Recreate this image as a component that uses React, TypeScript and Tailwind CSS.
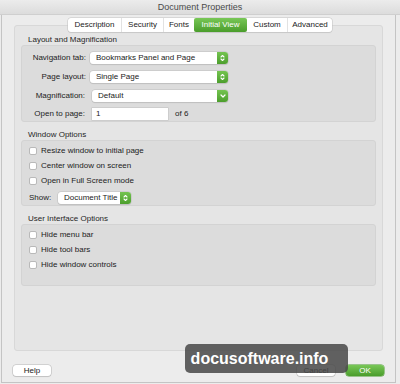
import React from 'react';

const Stepper = () => (
  <span className="flex h-full w-[11px] items-center justify-center rounded-r-[3px] bg-gradient-to-b from-[#74c450] to-[#4c9e2c]">
    <svg width="5" height="8" viewBox="0 0 5 8" fill="none" stroke="white" strokeWidth="1.1" strokeLinecap="round" strokeLinejoin="round">
      <path d="M1 3 L2.5 1.5 L4 3" />
      <path d="M1 5 L2.5 6.5 L4 5" />
    </svg>
  </span>
);

const Chevron = () => (
  <span className="flex h-full w-[11px] items-center justify-center rounded-r-[3px] bg-gradient-to-b from-[#74c450] to-[#4c9e2c]">
    <svg width="6" height="4" viewBox="0 0 6 4" fill="none" stroke="white" strokeWidth="1.2" strokeLinecap="round" strokeLinejoin="round">
      <path d="M1 1 L3 3 L5 1" />
    </svg>
  </span>
);

interface SelectProps {
  value: string;
  width: string;
  popup?: boolean;
}

const Select = ({ value, width, popup = false }: SelectProps) => (
  <div className={`flex h-[12px] items-center rounded-[3px] bg-white shadow-[0_0_0_0.5px_#bdbdbd,0_1px_1px_rgba(0,0,0,0.12)] ${width}`}>
    <span className="flex-1 pl-[6px] text-[8px] leading-none text-[#222]">{value}</span>
    {popup ? <Chevron /> : <Stepper />}
  </div>
);

const Check = ({ label }: { label: string }) => (
  <div className="flex h-[8px] items-center">
    <span className="h-[8px] w-[8px] rounded-[2px] border border-[#b9b9b9] bg-white" />
    <span className="ml-[4px] text-[8px] leading-none text-[#222]">{label}</span>
  </div>
);

const Section = ({ title, children, className }: { title: string; children: React.ReactNode; className: string }) => (
  <div>
    <div className="h-[10px] pl-[7px] text-[8px] leading-[10px] text-[#262626]">{title}</div>
    <div className={`rounded-[3px] border border-[#d3d3d3] bg-[#dcdcdc] ${className}`}>{children}</div>
  </div>
);

const tabs = ['Description', 'Security', 'Fonts', 'Initial View', 'Custom', 'Advanced'];
const tabWidths = ['w-[53px]', 'w-[42px]', 'w-[31px]', 'w-[53px]', 'w-[40px]', 'w-[45px]'];

export default function App() {
  return (
    <div className="relative flex h-[384px] w-[400px] flex-col overflow-hidden bg-[#ececec] font-['Liberation_Sans',Arial,sans-serif]">
      <div className="h-[15px] border-b border-[#cfcfcf] bg-gradient-to-b from-[#ececec] to-[#dcdcdc] text-center text-[9px] leading-[14px] text-[#4a4a4a]">
        Document Properties
      </div>

      <div className="flex flex-1 flex-col border-x border-b border-[#c4c4c4] mr-[4px] ml-[1px] mb-[1px]">
        <div className="relative z-10 mt-[3px] flex justify-center pl-[3px]">
          <div className="flex h-[14px] rounded-[3px] bg-white shadow-[0_0_0_0.5px_#c2c2c2,0_1px_1px_rgba(0,0,0,0.1)]">
            {tabs.map((t, i) => (
              <div
                key={t}
                className={`flex items-center justify-center text-[8px] leading-none ${tabWidths[i]} ${
                  t === 'Initial View'
                    ? 'rounded-[2px] bg-gradient-to-b from-[#78c756] to-[#4a9d2b] text-white'
                    : 'text-[#222]'
                } ${i > 0 && i !== 3 && i !== 4 ? 'border-l border-[#e2e2e2]' : ''}`}
              >
                {t}
              </div>
            ))}
          </div>
        </div>

        <div className="mx-[12px] -mt-[7px] h-[326px] rounded-[3px] border border-[#d8d8d8] bg-[#e5e5e5] px-[6px] pt-[9px]">
          <Section title="Layout and Magnification" className="h-[77px] pt-[6px]">
            <div className="flex h-[12px] items-center">
              <span className="w-[68px] pr-[4px] text-right text-[8px] text-[#222]">Navigation tab:</span>
              <Select value="Bookmarks Panel and Page" width="w-[138px]" />
            </div>
            <div className="mt-[7px] flex h-[12px] items-center">
              <span className="w-[68px] pr-[4px] text-right text-[8px] text-[#222]">Page layout:</span>
              <Select value="Single Page" width="w-[138px]" />
            </div>
            <div className="mt-[7px] flex h-[12px] items-center">
              <span className="w-[70px] pr-[7px] text-right text-[8px] text-[#222]">Magnification:</span>
              <Select value="Default" width="w-[136px]" popup />
            </div>
            <div className="mt-[6px] flex h-[12px] items-center">
              <span className="w-[70px] pr-[7px] text-right text-[8px] text-[#222]">Open to page:</span>
              <div className="flex h-[12px] w-[76px] items-center bg-white pl-[4px] text-[8px] text-[#222] shadow-[0_0_0_0.5px_#bdbdbd]">1</div>
              <span className="ml-[7px] text-[8px] text-[#222]">of 6</span>
            </div>
          </Section>

          <div className="h-[8px]" />

          <Section title="Window Options" className="h-[66px] pl-[7px] pt-[6px]">
            <div className="flex flex-col gap-[7px]">
              <Check label="Resize window to initial page" />
              <Check label="Center window on screen" />
              <Check label="Open in Full Screen mode" />
            </div>
            <div className="mt-[7px] flex h-[11px] items-center">
              <span className="w-[29px] text-[8px] text-[#222]">Show:</span>
              <Select value="Document Title" width="w-[73px]" />
            </div>
          </Section>

          <div className="h-[8px]" />

          <Section title="User Interface Options" className="h-[62px] pl-[7px] pt-[6px]">
            <div className="flex flex-col gap-[7px]">
              <Check label="Hide menu bar" />
              <Check label="Hide tool bars" />
              <Check label="Hide window controls" />
            </div>
          </Section>
        </div>

        <div className="mt-[14px] flex items-center px-[11px]">
          <button className="h-[11px] w-[38px] rounded-[3px] bg-white text-[8px] leading-none text-[#222] shadow-[0_0_0_0.5px_#b5b5b5,0_1px_1px_rgba(0,0,0,0.12)]">
            Help
          </button>
          <div className="flex-1" />
          <button className="h-[11px] w-[38px] rounded-[3px] bg-white text-[8px] leading-none text-[#222] shadow-[0_0_0_0.5px_#b5b5b5,0_1px_1px_rgba(0,0,0,0.12)]">
            Cancel
          </button>
          <button className="ml-[11px] h-[11px] w-[38px] rounded-[3px] bg-gradient-to-b from-[#78c756] to-[#4a9d2b] text-[8px] leading-none text-white shadow-[0_0_0_0.5px_#479a2a]">
            OK
          </button>
        </div>
      </div>

      <div className="absolute left-[185px] top-[344px] flex h-[29px] w-[163px] items-center justify-center rounded-[5px] bg-[rgba(72,72,72,0.86)] pr-[14px] text-[16px] font-bold text-white">
        docusoftware.info
      </div>
    </div>
  );
}
